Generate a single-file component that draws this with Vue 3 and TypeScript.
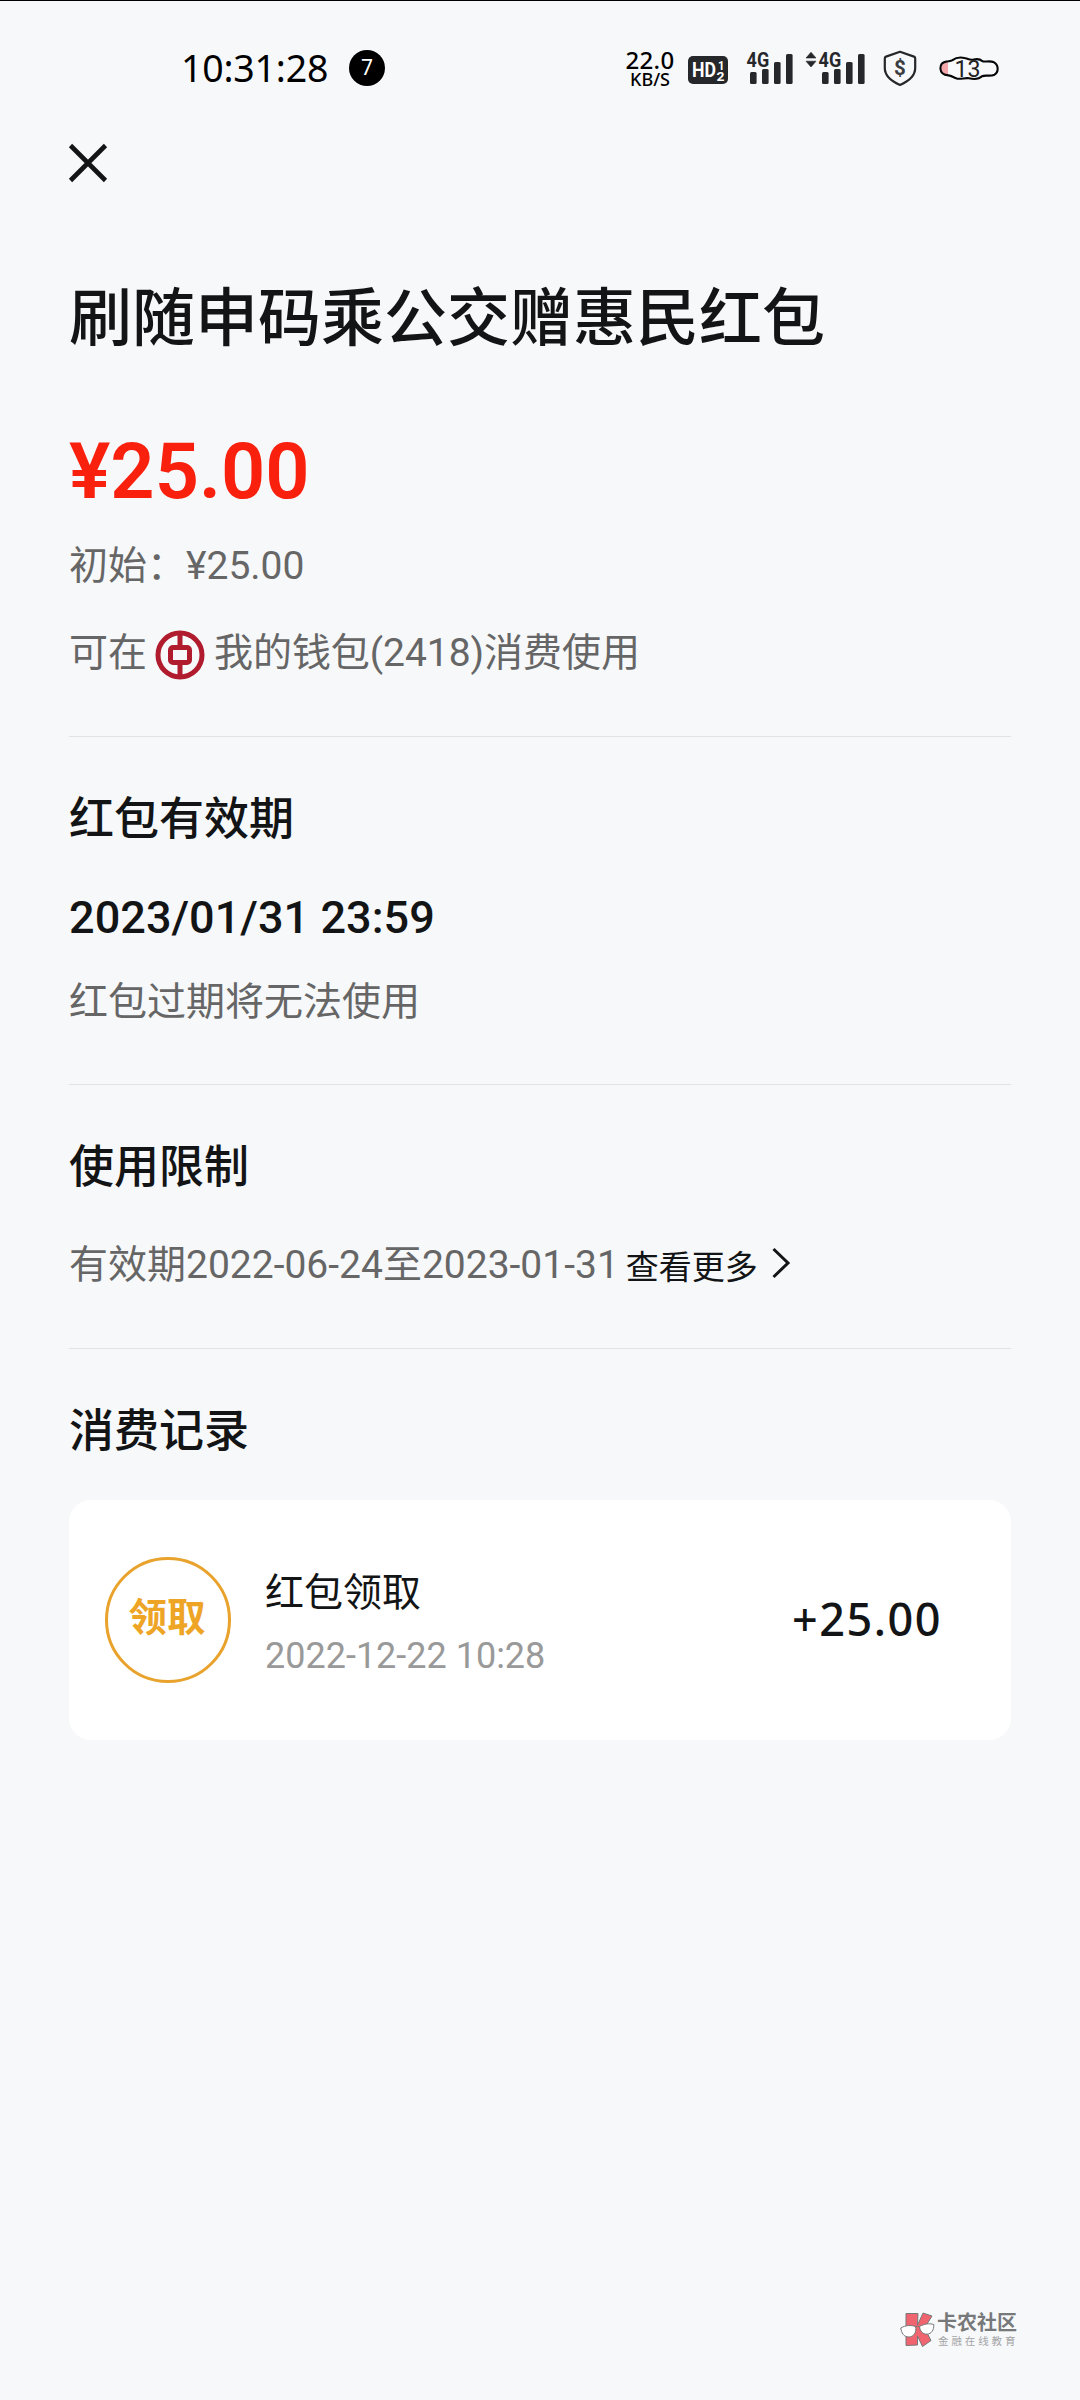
<script setup lang="ts">
interface Bar {
  x: number
  y: number
}

interface RecordItem {
  tag: string
  title: string
  time: string
  amount: string
}

const bars: Bar[] = [
  { x: 4, y: 22 },
  { x: 16, y: 19 },
  { x: 28, y: 12 },
  { x: 40, y: 4 },
]

const records: RecordItem[] = [
  { tag: '领取', title: '红包领取', time: '2022-12-22 10:28', amount: '+25.00' },
]
</script>

<template>
  <div class="screen">
    <header class="status">
      <span class="clock">10:31:28</span>
      <span class="count">7</span>
      <div class="tray">
        <div class="speed">
          <span class="rate">22.0</span>
          <span class="unit">KB/S</span>
        </div>
        <svg class="hd" width="40" height="28" viewBox="0 0 40 28">
          <rect width="40" height="28" rx="5" fill="#25272a" />
          <g fill="#fff" font-weight="700">
            <text x="4" y="21" font-size="20.5" textLength="24" lengthAdjust="spacingAndGlyphs">HD</text>
            <text x="30" y="13.5" font-size="13" textLength="6.5" lengthAdjust="spacingAndGlyphs">1</text>
            <text x="28.6" y="24.6" font-size="13" textLength="8" lengthAdjust="spacingAndGlyphs">2</text>
          </g>
        </svg>
        <svg class="sig" width="48" height="36" viewBox="0 0 48 36">
          <text x="0.6" y="17" font-size="21" font-weight="700" fill="#25272a" textLength="22.600" lengthAdjust="spacingAndGlyphs">4G</text>
          <rect v-for="b in bars" :key="b.x" :x="b.x" :y="b.y" width="6.6" :height="34 - b.y" rx="1.5" fill="#25272a" />
        </svg>
        <svg class="arrows" width="12" height="36" viewBox="0 0 12 36">
          <path d="M6 2.2 11 8H1zM6 17 1 11.200h10z" fill="#25272a" stroke="#25272a" stroke-width="0.6" stroke-linejoin="round" />
        </svg>
        <svg class="sig2" width="48" height="36" viewBox="0 0 48 36">
          <text x="0.6" y="17" font-size="21" font-weight="700" fill="#25272a" textLength="22.600" lengthAdjust="spacingAndGlyphs">4G</text>
          <rect v-for="b in bars" :key="b.x" :x="b.x" :y="b.y" width="6.6" :height="34 - b.y" rx="1.5" fill="#25272a" />
        </svg>
        <svg class="shield" width="34" height="37" viewBox="0 0 34 37">
          <path d="M17 1.8 31 6.600Q32.200 7 32.200 8.400V18C32.200 26.500 25 31.500 17 35 9 31.500 1.800 26.500 1.800 18V8.400Q1.800 7 3 6.600Z" fill="none" stroke="#25272a" stroke-width="2.2" stroke-linejoin="round" />
          <text x="17" y="25.200" font-size="20.500" font-weight="700" text-anchor="middle" fill="#3a3c3f">$</text>
        </svg>
        <svg class="battery" width="60" height="26" viewBox="0 0 60 26">
          <path d="M9 6.500V18.500Q3 18.500 2 12.500 3 6.500 9 6.500Z" fill="#f4a6ab" />
          <path d="M7 5.600C10 5 11.500 5.600 13.500 4.200 17 1.500 22 1.200 25.500 2 28.500 2.600 31 4.500 34.500 3.600 38 2.600 41 3 43.500 5.200 46 6.200 51 4.400 55 6.300 59.800 9 59.800 16 55.500 18.700 51 20.800 46 18.600 43 20.200 39.500 23.600 34 23.200 30 22.200 25.500 21.600 22.500 23.400 18 22.600 14.500 21.800 13 19.600 9.500 19.400 4 19 1.600 16 1.400 12.500 1.400 9 3.500 6.200 7 5.600Z" fill="none" stroke="#060606" stroke-width="2.100" />
          <text x="15.500" y="20.800" font-size="24" fill="#222" textLength="26" lengthAdjust="spacingAndGlyphs">13</text>
        </svg>
      </div>
    </header>

    <nav class="nav">
      <svg width="38" height="38" viewBox="0 0 38 38">
        <path d="M1.500 1.500 36.500 36.500M36.500 1.500 1.500 36.500" stroke="#131415" stroke-width="4.600" />
      </svg>
    </nav>

    <main class="body">
      <section class="summary">
        <h1>刷随申码乘公交赠惠民红包</h1>
        <p class="amount">¥25.00</p>
        <p class="line">初始：¥25.00</p>
        <p class="line wallet">
          <span>可在</span>
          <svg width="50" height="50" viewBox="0 0 50 50" fill="none" stroke="#b01c2e">
            <circle cx="25" cy="25" r="22" stroke-width="5" />
            <path d="M25 3V17M25 33V47" stroke-width="5" />
            <rect x="15.500" y="17.500" width="19" height="15" rx="2.500" stroke-width="5" />
          </svg>
          <span>我的钱包(2418)消费使用</span>
        </p>
      </section>

      <section class="block">
        <h2>红包有效期</h2>
        <p class="date">2023/01/31 23:59</p>
        <p class="line">红包过期将无法使用</p>
      </section>

      <section class="block limits">
        <h2>使用限制</h2>
        <p class="line range">
          <span>有效期2022-06-24至2023-01-31</span>
          <a class="more">查看更多</a>
          <svg width="20" height="32" viewBox="0 0 20 32">
            <path d="M2.500 2 17 16 2.500 30" fill="none" stroke="#131415" stroke-width="3" />
          </svg>
        </p>
      </section>

      <section class="block records">
        <h2>消费记录</h2>
        <article v-for="r in records" :key="r.time" class="card">
          <span class="tag">{{ r.tag }}</span>
          <div class="info">
            <span class="name">{{ r.title }}</span>
            <span class="time">{{ r.time }}</span>
          </div>
          <span class="sum">{{ r.amount }}</span>
        </article>
      </section>
    </main>

    <footer class="mark">
      <svg width="35" height="36" viewBox="0 0 35 36">
        <g stroke="#77787a" stroke-width="1" stroke-linejoin="round">
          <path d="M6 1.500H18L17.500 13 23 1 32 4 24.500 16 31 28.500 22.500 34.500 17.500 24V33L6 33.500Z" fill="#f0646f" />
          <path d="M.8 16C6 13 11 13 15.500 14.500 17 20 13.500 25 9 25 3.500 25 1.500 21 .8 16Z" fill="#fff" />
          <path d="M19.500 14.500C24 12 29 11 33.800 12.500 34 18 31.500 22 27 22.200 22.500 22.200 20 19 19.500 14.500Z" fill="#fff" />
          <path d="M15.500 15Q17.500 13.500 19.500 14.800" fill="none" />
        </g>
      </svg>
      <div class="mark-text">
        <span class="mark-name">卡农社区</span>
        <span class="mark-sub">金融在线教育</span>
      </div>
    </footer>
  </div>
</template>

<style>
body {
  background: #f7f8fa;
}
</style>

<style scoped>
.screen {
  box-sizing: border-box;
  width: 1080px;
  height: 2400px;
  display: flex;
  flex-direction: column;
  border-top: 1px solid #000;
  background: #f7f8fa;
  color: #131415;
  font-family: Roboto, "Noto Sans CJK SC", sans-serif;
  overflow: hidden;
}

h1,
h2,
p {
  margin: 0;
}

svg {
  display: block;
  flex: none;
  overflow: visible;
}

.status {
  height: 135px;
  box-sizing: border-box;
  padding: 42px 0 0 181px;
  display: flex;
  align-items: flex-start;
  color: #000;
}

.clock {
  width: 168px;
  font-family: "Noto Sans", sans-serif;
  font-size: 37.500px;
  line-height: 50px;
  letter-spacing: -0.2px;
}

.count {
  width: 36px;
  height: 36px;
  margin-top: 7px;
  border-radius: 50%;
  background: #000;
  color: #fff;
  font-family: "Noto Sans", sans-serif;
  font-size: 21px;
  line-height: 35px;
  text-align: center;
}

.tray {
  display: flex;
  align-items: flex-start;
  margin: 1px 0 0 240px;
}

.speed {
  width: 50px;
  display: flex;
  flex-direction: column;
  align-items: center;
  font-family: "Noto Sans", sans-serif;
  font-weight: 500;
  white-space: nowrap;
}

.rate {
  margin-top: 4px;
  font-size: 24px;
  line-height: 24px;
  letter-spacing: 0.3px;
}

.unit {
  font-size: 18px;
  line-height: 15px;
}

.hd {
  margin: 12px 0 0 13px;
}

.sig {
  margin: 6px 0 0 18px;
}

.arrows {
  margin: 6px 0 0 11px;
}

.sig2 {
  margin: 6px 0 0 1px;
}

.shield {
  margin: 6px 0 0 17px;
}

.battery {
  margin: 12px 0 0 21.500px;
}

.nav {
  height: 140px;
  box-sizing: border-box;
  padding: 8px 0 0 69px;
}

.body {
  padding: 0 69px;
}

h1 {
  font-size: 63px;
  font-weight: 500;
  line-height: 86px;
  height: 88px;
  white-space: nowrap;
}

.amount {
  margin-top: 62px;
  color: #f9200e;
  font-size: 77.500px;
  font-weight: 600;
  line-height: 91px;
  height: 90px;
}

.line {
  color: #666;
  font-size: 39px;
  line-height: 56px;
  white-space: nowrap;
}

.amount + .line {
  margin-top: 22px;
}

.wallet {
  display: flex;
  margin-top: 31px;
}

.wallet svg {
  margin: 5px 9px 0 8px;
}

.wallet span:last-child {
  letter-spacing: -0.05px;
}

.summary {
  height: 460px;
}

.block {
  box-sizing: border-box;
  height: 348px;
  border-top: 1px solid #e0e2e4;
  padding-top: 53px;
}

h2 {
  font-size: 45px;
  font-weight: 500;
  line-height: 60px;
}

.date {
  margin-top: 38px;
  font-size: 45px;
  font-weight: 500;
  line-height: 60px;
  letter-spacing: 0.05px;
}

.date + .line {
  margin-top: 26px;
}

.limits {
  height: 264px;
}

.range {
  display: flex;
  margin-top: 39px;
}

.more {
  margin-left: 7px;
  color: #131415;
  font-size: 33px;
  line-height: 61px;
}

.range svg {
  margin: 10px 0 0 13px;
}

.card {
  box-sizing: border-box;
  height: 240px;
  margin-top: 38px;
  padding: 0 69px 0 36px;
  display: flex;
  align-items: center;
  border-radius: 22px;
  background: #fff;
}

.tag {
  box-sizing: border-box;
  width: 126px;
  height: 126px;
  padding-right: 2px;
  border: 3px solid #e9a22b;
  border-radius: 50%;
  color: #eea526;
  font-size: 38.500px;
  font-weight: 600;
  line-height: 115px;
  text-align: center;
}

.info {
  flex: 1;
  margin: 5px 0 0 34px;
  display: flex;
  flex-direction: column;
}

.name {
  font-size: 39px;
  line-height: 56px;
}

.time {
  margin-top: 10px;
  color: #999;
  font-size: 36px;
  line-height: 50px;
}

.sum {
  margin-top: -2px;
  font-family: "Noto Sans", sans-serif;
  font-size: 45px;
  font-weight: 500;
  line-height: 60px;
  letter-spacing: 1.500px;
}

.mark {
  display: flex;
  margin: auto 63px 52px auto;
}

.mark-text {
  display: flex;
  flex-direction: column;
  margin-left: 2px;
  white-space: nowrap;
}

.mark-name {
  color: #77787a;
  font-size: 20px;
  font-weight: 700;
  line-height: 23px;
}

.mark-sub {
  margin-left: 1px;
  color: #a4a5a7;
  font-size: 10.500px;
  line-height: 13px;
  letter-spacing: 2.900px;
  margin-right: -4px;
}
</style>
